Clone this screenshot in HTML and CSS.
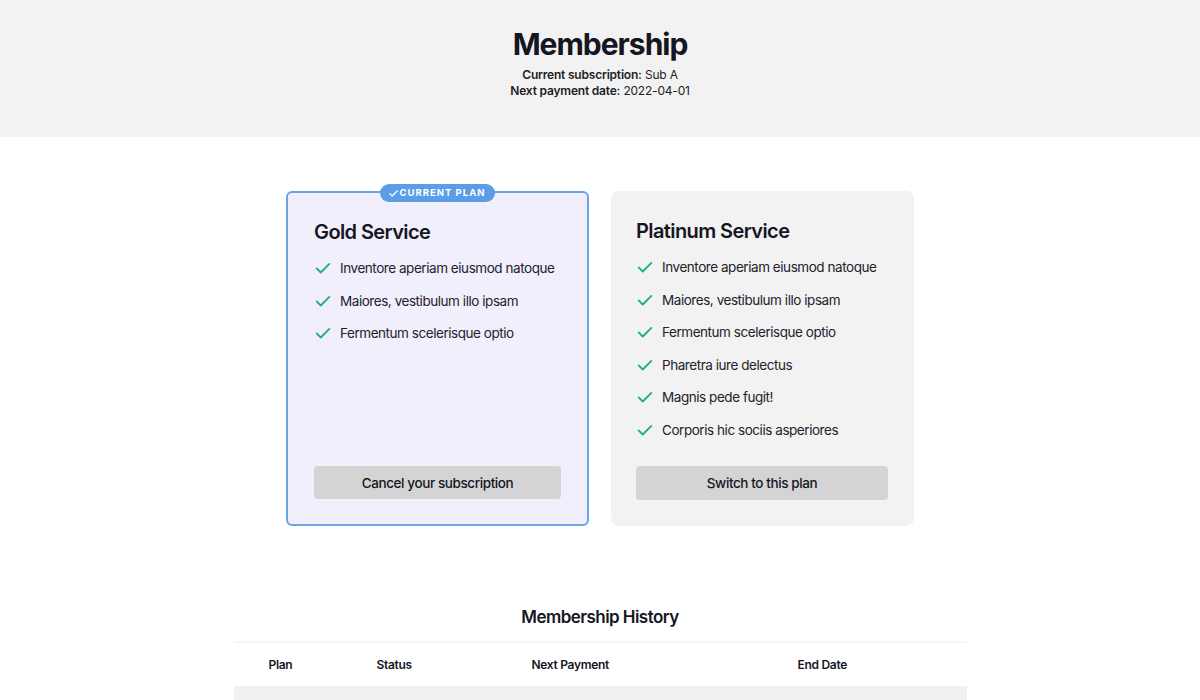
FILE: index.html
```html
<!DOCTYPE html>
<html lang="en">
<head>
<meta charset="utf-8">
<title>Membership</title>
<link rel="stylesheet" href="styles.css">
</head>
<body>
<header class="hero">
  <h1 class="hero-title">Membership</h1>
  <p class="hero-line"><strong>Current subscription:</strong> Sub A</p>
  <p class="hero-line"><strong>Next payment date:</strong> 2022-04-01</p>
</header>

<main class="content">
  <section class="plans">
    <article class="plan plan-current">
      <span class="badge"><svg class="badge-check" viewBox="0 0 24 24"><path d="M4 12.5l5 5L20 6.5"/></svg>CURRENT PLAN</span>
      <h2 class="plan-name">Gold Service</h2>
      <ul class="features">
        <li><svg class="check" viewBox="0 0 24 24"><path d="M3.5 12.5l5.5 5.5L20.5 6.5"/></svg>Inventore aperiam eiusmod natoque</li>
        <li><svg class="check" viewBox="0 0 24 24"><path d="M3.5 12.5l5.5 5.5L20.5 6.5"/></svg>Maiores, vestibulum illo ipsam</li>
        <li><svg class="check" viewBox="0 0 24 24"><path d="M3.5 12.5l5.5 5.5L20.5 6.5"/></svg>Fermentum scelerisque optio</li>
      </ul>
      <button class="plan-btn">Cancel your subscription</button>
    </article>

    <article class="plan">
      <h2 class="plan-name">Platinum Service</h2>
      <ul class="features">
        <li><svg class="check" viewBox="0 0 24 24"><path d="M3.5 12.5l5.5 5.5L20.5 6.5"/></svg>Inventore aperiam eiusmod natoque</li>
        <li><svg class="check" viewBox="0 0 24 24"><path d="M3.5 12.5l5.5 5.5L20.5 6.5"/></svg>Maiores, vestibulum illo ipsam</li>
        <li><svg class="check" viewBox="0 0 24 24"><path d="M3.5 12.5l5.5 5.5L20.5 6.5"/></svg>Fermentum scelerisque optio</li>
        <li><svg class="check" viewBox="0 0 24 24"><path d="M3.5 12.5l5.5 5.5L20.5 6.5"/></svg>Pharetra iure delectus</li>
        <li><svg class="check" viewBox="0 0 24 24"><path d="M3.5 12.5l5.5 5.5L20.5 6.5"/></svg>Magnis pede fugit!</li>
        <li><svg class="check" viewBox="0 0 24 24"><path d="M3.5 12.5l5.5 5.5L20.5 6.5"/></svg>Corporis hic sociis asperiores</li>
      </ul>
      <button class="plan-btn">Switch to this plan</button>
    </article>
  </section>

  <section class="history">
    <h2 class="history-title">Membership History</h2>
    <table class="history-table">
      <thead>
        <tr>
          <th class="col-plan">Plan</th>
          <th class="col-status">Status</th>
          <th class="col-next">Next Payment</th>
          <th class="col-end">End Date</th>
        </tr>
      </thead>
      <tbody>
        <tr class="row-empty">
          <td colspan="4"></td>
        </tr>
      </tbody>
    </table>
  </section>
</main>
</body>
</html>
```

FILE: styles.css
```css
* { box-sizing: border-box; }

html, body {
  margin: 0;
  padding: 0;
  background: #ffffff;
  font-family: Inter, "Noto Sans", "Liberation Sans", sans-serif;
  color: #15161f;
}

.hero {
  background: #f2f2f2;
  height: 137px;
  padding-top: 26px;
  text-align: center;
}

.hero-title {
  margin: 0 0 5px;
  font-size: 30px;
  line-height: 36px;
  font-weight: 700;
  letter-spacing: -1px;
}

.hero-line {
  margin: 0;
  font-size: 12px;
  line-height: 16px;
  letter-spacing: -0.2px;
  color: #1d1e26;
}

.hero-line strong { font-weight: 600; }

.content {
  padding-top: 54px;
}

.plans {
  display: flex;
  justify-content: center;
  gap: 22px;
}

.plan {
  position: relative;
  width: 303px;
  height: 335px;
  background: #f2f2f2;
  border-radius: 8px;
  padding: 26px 26px 26px 25px;
  display: flex;
  flex-direction: column;
}

.plan-current {
  background: #f1effc;
  border: 2px solid #6aa4e6;
  border-radius: 6px;
  padding: 25px 26px 25px 26px;
}

.badge {
  position: absolute;
  top: -9px;
  left: 50%;
  transform: translateX(-50%);
  height: 18px;
  padding: 0 10px 0 8px;
  border-radius: 9px;
  background: #5c9de8;
  color: #ffffff;
  font-size: 9.5px;
  font-weight: 700;
  letter-spacing: 1px;
  line-height: 18px;
  white-space: nowrap;
  display: inline-flex;
  align-items: center;
  gap: 1px;
}

.badge-check {
  width: 11px;
  height: 11px;
  fill: none;
  stroke: #ffffff;
  stroke-width: 2.6;
  stroke-linecap: round;
  stroke-linejoin: round;
}

.plan-name {
  margin: 0 0 6px;
  font-size: 20px;
  line-height: 28px;
  font-weight: 600;
  letter-spacing: -0.6px;
  color: #15161f;
}

.features {
  list-style: none;
  margin: 0;
  padding: 0;
}

.features li {
  display: flex;
  align-items: center;
  gap: 8px;
  font-size: 13.5px;
  letter-spacing: -0.45px;
  line-height: 20.5px;
  padding: 6px 0;
  color: #22232b;
  white-space: nowrap;
}

.check {
  width: 18px;
  height: 18px;
  flex: none;
  fill: none;
  stroke: #1fae7e;
  stroke-width: 2.4;
  stroke-linecap: round;
  stroke-linejoin: round;
}

.plan-btn {
  margin-top: auto;
  width: 100%;
  height: 34px;
  border: none;
  border-radius: 4px;
  background: #d4d4d4;
  font-family: inherit;
  font-size: 13.5px;
  letter-spacing: -0.4px;
  font-weight: 500;
  color: #15161f;
  cursor: pointer;
}

.plan-current .plan-btn { height: 33px; }

.history {
  padding-top: 79px;
  display: flex;
  flex-direction: column;
  align-items: center;
}

.history-title {
  margin: 0 0 12px;
  font-size: 17px;
  line-height: 24px;
  font-weight: 600;
  letter-spacing: -0.55px;
  color: #15161f;
}

.history-table {
  width: 733px;
  border-collapse: collapse;
  border-top: 2px solid #f5f5f5;
}

.history-table th {
  text-align: left;
  font-size: 12px;
  font-weight: 600;
  letter-spacing: -0.3px;
  height: 44px;
  padding: 0 0 0 35px;
  color: #15161f;
}

.col-plan { width: 108px; }
.col-status { width: 155px; }
.col-next { width: 266px; }
.col-end { width: 204px; }

.history-table td {
  background: #f1f1f1;
  height: 40px;
  padding: 0;
}
```
